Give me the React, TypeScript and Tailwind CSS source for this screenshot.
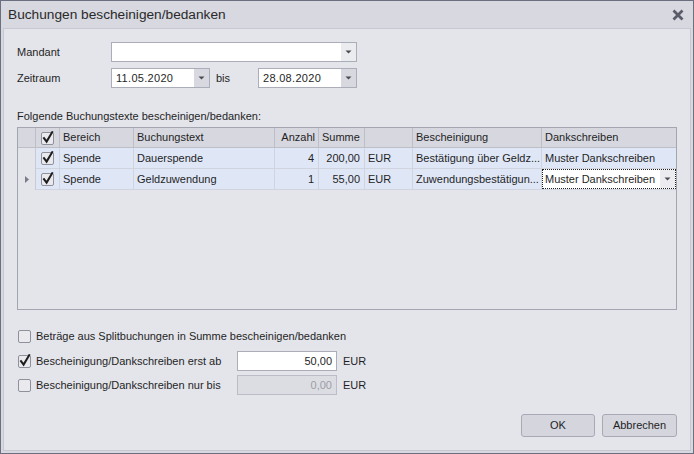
import React from 'react'

const font = { fontFamily: '"Liberation Sans", Arial, sans-serif' }

function Check({ checked }: { checked: boolean }) {
  return (
    <svg width="14" height="14" viewBox="0 0 14 14" className="shrink-0">
      <rect x="0.5" y="1.5" width="12" height="12" rx="1.5" fill="#e9e9ee" stroke="#8e909c" />
      {checked && (
        <path d="M3 7.2 L5.6 10.6 L11.2 1.2" fill="none" stroke="#1e1e1e" strokeWidth="2" strokeLinecap="square" />
      )}
    </svg>
  )
}

function Arrow() {
  return (
    <svg width="7" height="4" viewBox="0 0 7 4">
      <path d="M0.5 0.5 L6.5 0.5 L3.5 3.5 Z" fill="#4a4a52" />
    </svg>
  )
}

function Combo({ value, width, buttonBg }: { value: string; width: string; buttonBg: string }) {
  return (
    <div className={`flex h-[20px] ${width} border border-[#abadb8] bg-white`}>
      <div className="flex-1 flex items-center pl-[4px] text-[11px] text-[#1f1f1f] tracking-[0.3px]">{value}</div>
      <div className={`w-[15px] flex items-center justify-center ${buttonBg}`}>
        <Arrow />
      </div>
    </div>
  )
}

const cols = 'grid-cols-[18px_24px_74px_141px_44px_46px_48px_129px_1fr]'

const rows = [
  { bereich: 'Spende', text: 'Dauerspende', anzahl: '4', summe: '200,00', besch: 'Bestätigung über Geldz...', dank: 'Muster Dankschreiben', focused: false },
  { bereich: 'Spende', text: 'Geldzuwendung', anzahl: '1', summe: '55,00', besch: 'Zuwendungsbestätigun...', dank: 'Muster Dankschreiben', focused: true },
]

export default function App() {
  return (
    <div style={font} className="w-[694px] h-[454px] bg-[#d7d8e0] border border-[#6c6f80] flex flex-col text-[#1f1f1f]">
      {/* Title bar */}
      <div className="h-[27px] flex items-center justify-between pl-[7px] pr-[9px] shrink-0">
        <span className="text-[13.7px] text-[#2a2a2a] pt-[1px]">Buchungen bescheinigen/bedanken</span>
        <svg width="12" height="12" viewBox="0 0 12 12">
          <path d="M1.5 1.5 L10.5 10.5 M10.5 1.5 L1.5 10.5" stroke="#595b68" strokeWidth="2.8" />
        </svg>
      </div>

      {/* Content frame */}
      <div className="mx-[2px] mb-[2px] flex-1 border border-[#c7c8d1] bg-[#e4e5eb] flex flex-col px-[13px] pt-[13px] text-[11px]">
        {/* Mandant */}
        <div className="flex items-center h-[20px]">
          <span className="w-[94px]">Mandant</span>
          <Combo value="" width="w-[246px]" buttonBg="bg-[#ebecf0]" />
        </div>
        {/* Zeitraum */}
        <div className="flex items-center h-[20px] mt-[6px]">
          <span className="w-[94px]">Zeitraum</span>
          <Combo value="11.05.2020" width="w-[99px]" buttonBg="bg-[#d8d9e0]" />
          <span className="w-[48px] pl-[6px]">bis</span>
          <Combo value="28.08.2020" width="w-[99px]" buttonBg="bg-[#d8d9e0]" />
        </div>

        <div className="mt-[21px] h-[14px] leading-[14px]">Folgende Buchungstexte bescheinigen/bedanken:</div>

        {/* Grid */}
        <div className="mt-[4px] w-[660px] h-[183px] border border-[#a3a5b0] bg-[#e4e5eb] flex flex-col">
          <div className={`grid ${cols} h-[20px] bg-[#d6d7df] border-b border-[#bdbec8]`}>
            <div className="border-r border-[#bdbec8]" />
            <div className="border-r border-[#bdbec8] flex items-center justify-center"><Check checked /></div>
            <div className="border-r border-[#bdbec8] flex items-center pl-[3px]">Bereich</div>
            <div className="border-r border-[#bdbec8] flex items-center pl-[3px]">Buchungstext</div>
            <div className="border-r border-[#bdbec8] flex items-center justify-end pr-[3px]">Anzahl</div>
            <div className="border-r border-[#bdbec8] flex items-center pl-[3px]">Summe</div>
            <div className="border-r border-[#bdbec8]" />
            <div className="border-r border-[#bdbec8] flex items-center pl-[3px]">Bescheinigung</div>
            <div className="flex items-center pl-[3px]">Dankschreiben</div>
          </div>
          {rows.map((r, i) => (
            <div key={i} className={`grid ${cols} h-[21px]`}>
              <div className="border-r border-[#c9cad3] flex items-center justify-center">
                {r.focused && (
                  <svg width="4" height="7" viewBox="0 0 4 7">
                    <path d="M0 0 L4 3.5 L0 7 Z" fill="#7a7c88" />
                  </svg>
                )}
              </div>
              <div className="border-r border-b border-[#d0d4df] bg-[#dfe7f7] flex items-center justify-center"><Check checked /></div>
              <div className="border-r border-b border-[#d0d4df] bg-[#dfe7f7] flex items-center pl-[3px]">{r.bereich}</div>
              <div className="border-r border-b border-[#d0d4df] bg-[#dfe7f7] flex items-center pl-[3px]">{r.text}</div>
              <div className="border-r border-b border-[#d0d4df] bg-[#dfe7f7] flex items-center justify-end pr-[4px]">{r.anzahl}</div>
              <div className="border-r border-b border-[#d0d4df] bg-[#dfe7f7] flex items-center justify-end pr-[4px]">{r.summe}</div>
              <div className="border-r border-b border-[#d0d4df] bg-[#dfe7f7] flex items-center pl-[3px]">EUR</div>
              <div className="border-r border-b border-[#d0d4df] bg-[#dfe7f7] flex items-center pl-[3px] whitespace-nowrap overflow-hidden">{r.besch}</div>
              {r.focused ? (
                <div className="border-b border-[#d0d4df] bg-[#dfe7f7]">
                  <div className="h-full border border-dotted border-[#202020] bg-white flex items-center">
                    <span className="flex-1 pl-[2px]">{r.dank}</span>
                    <div className="w-[15px] h-full bg-[#ececf0] flex items-center justify-center"><Arrow /></div>
                  </div>
                </div>
              ) : (
                <div className="border-b border-[#d0d4df] bg-[#dfe7f7] flex items-center pl-[3px]">{r.dank}</div>
              )}
            </div>
          ))}
        </div>

        {/* Options */}
        <div className="mt-[18px] flex items-center h-[16px] gap-[4px] pl-[1px]">
          <Check checked={false} />
          <span>Beträge aus Splitbuchungen in Summe bescheinigen/bedanken</span>
        </div>
        <div className="mt-[7px] flex items-center h-[20px] pl-[1px]">
          <Check checked />
          <span className="w-[205px] pl-[4px]">Bescheinigung/Dankschreiben erst ab</span>
          <div className="w-[100px] h-[20px] border border-[#abadb8] bg-white flex items-center justify-end pr-[4px]">50,00</div>
          <span className="pl-[6px]">EUR</span>
        </div>
        <div className="mt-[4px] flex items-center h-[20px] pl-[1px]">
          <Check checked={false} />
          <span className="w-[205px] pl-[4px]">Bescheinigung/Dankschreiben nur bis</span>
          <div className="w-[100px] h-[20px] border border-[#bcbdc6] bg-[#dcdde3] text-[#9c9da6] flex items-center justify-end pr-[4px]">0,00</div>
          <span className="pl-[6px]">EUR</span>
        </div>

        {/* Buttons */}
        <div className="mt-[19px] flex justify-end gap-[7px] w-[660px]">
          <button className="w-[74px] h-[23px] bg-[#d4d5dd] border border-[#a7a9b4] rounded-[3px] text-[11px]">OK</button>
          <button className="w-[75px] h-[23px] bg-[#d4d5dd] border border-[#a7a9b4] rounded-[3px] text-[11px]">Abbrechen</button>
        </div>
      </div>
    </div>
  )
}
